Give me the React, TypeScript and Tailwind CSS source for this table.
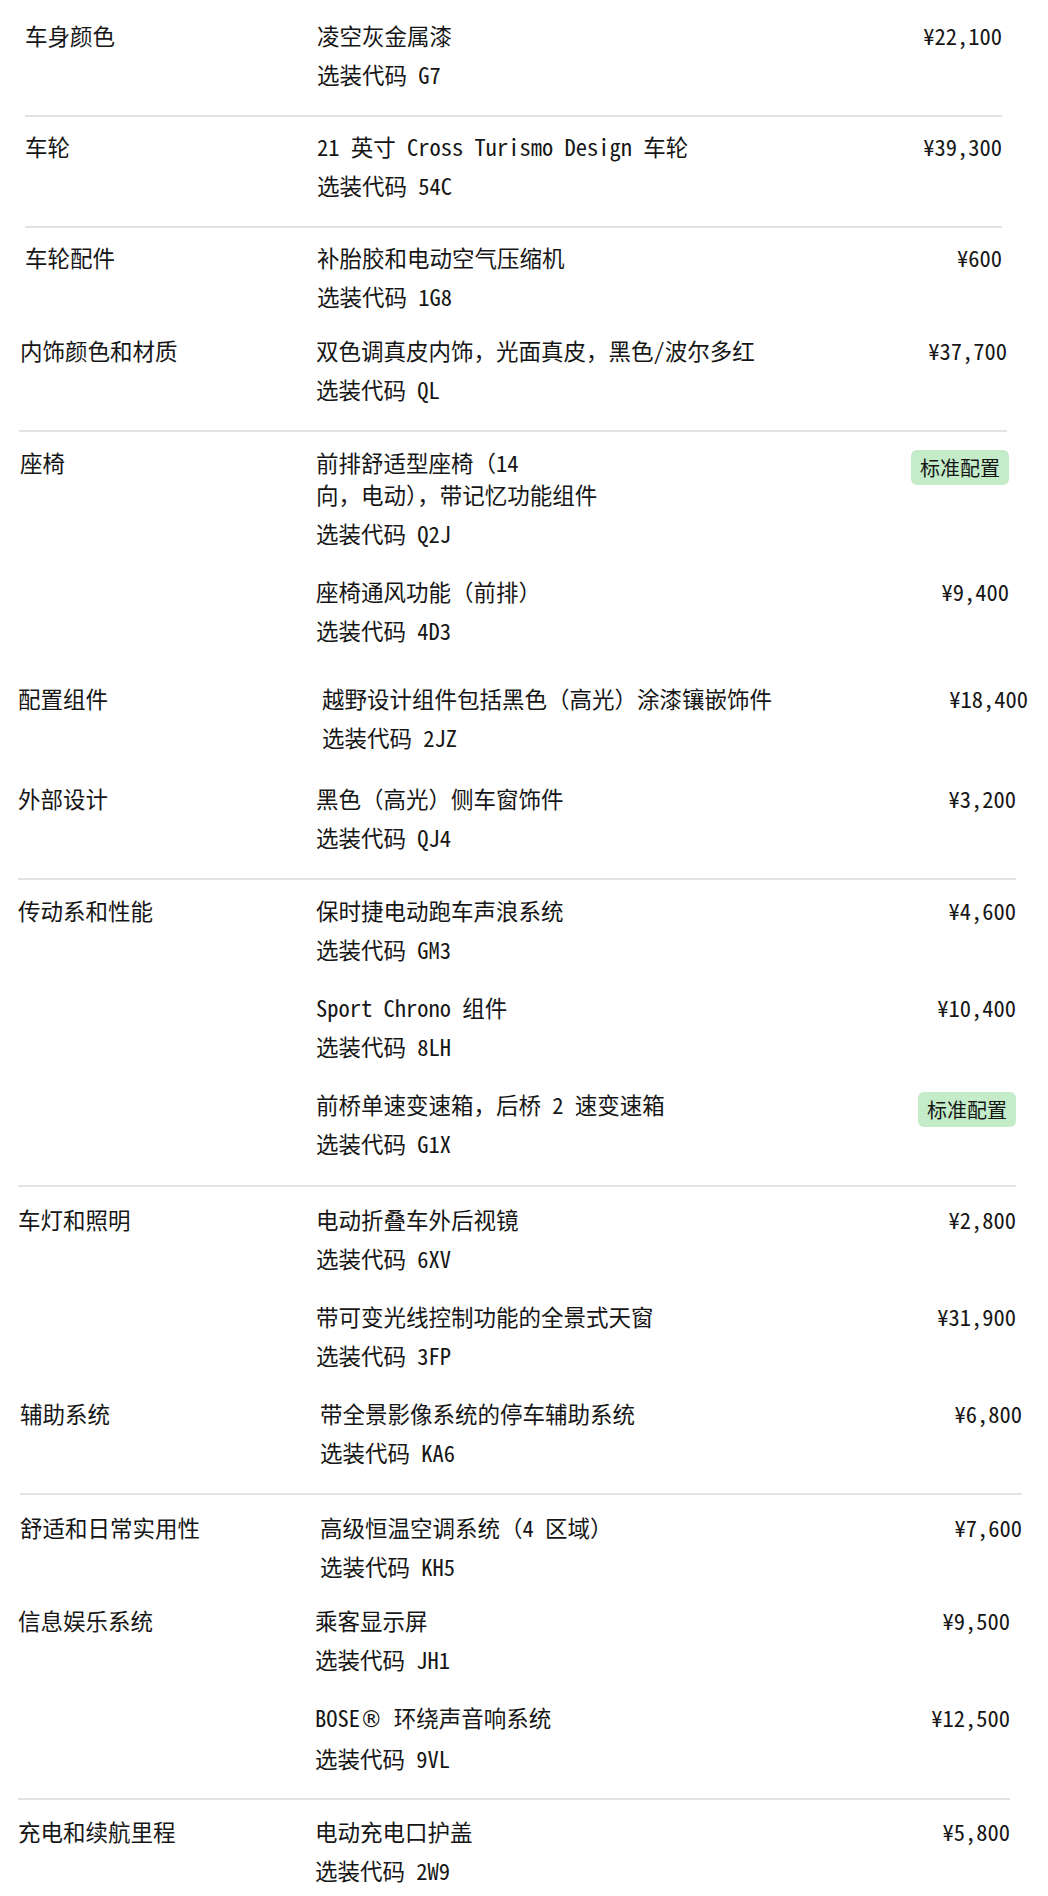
import React from "react";

// Option list of a configured car: category label, then one or more
// options (name + option code) with a price or a "standard" badge.

type Option = {
  name: React.ReactNode;
  code: string;
  price?: string;
  standard?: boolean;
};

type Block = {
  label: string;
  box: string; // margins, width, padding, border
  labelCol: string;
  options: Option[];
};

const blocks: Block[] = [
  {
    label: "车身颜色",
    box: "ml-[25px] w-[977px] pt-[19px] pb-[25px] border-b-2 border-[#e3e3e3]",
    labelCol: "w-[292px]",
    options: [{ name: "凌空灰金属漆", code: "G7", price: "¥22,100" }],
  },
  {
    label: "车轮",
    box: "ml-[25px] w-[977px] pt-[13px] pb-[25px] border-b-2 border-[#e3e3e3]",
    labelCol: "w-[292px]",
    options: [
      { name: "21 英寸 Cross Turismo Design 车轮", code: "54C", price: "¥39,300" },
    ],
  },
  {
    label: "车轮配件",
    box: "ml-[25px] w-[977px] pt-[13px]",
    labelCol: "w-[292px]",
    options: [{ name: "补胎胶和电动空气压缩机", code: "1G8", price: "¥600" }],
  },
  {
    label: "内饰颜色和材质",
    box: "ml-[19px] w-[988px] pt-[22px] pb-[25px] border-b-2 border-[#e3e3e3]",
    labelCol: "w-[297px] pl-[1px]",
    options: [
      { name: "双色调真皮内饰，光面真皮，黑色/波尔多红", code: "QL", price: "¥37,700" },
    ],
  },
  {
    label: "座椅",
    box: "ml-[19px] w-[990px] pt-[14px]",
    labelCol: "w-[297px] pl-[1px]",
    options: [
      {
        name: (
          <>
            前排舒适型座椅（14
            <br />
            向，电动），带记忆功能组件
          </>
        ),
        code: "Q2J",
        standard: true,
      },
      { name: "座椅通风功能（前排）", code: "4D3", price: "¥9,400" },
    ],
  },
  {
    label: "配置组件",
    box: "ml-[18px] w-[1010px] pt-[36px]",
    labelCol: "w-[304px]",
    options: [
      { name: "越野设计组件包括黑色（高光）涂漆镶嵌饰件", code: "2JZ", price: "¥18,400" },
    ],
  },
  {
    label: "外部设计",
    box: "ml-[18px] w-[998px] pt-[29px] pb-[25px] border-b-2 border-[#e3e3e3]",
    labelCol: "w-[298px]",
    options: [{ name: "黑色（高光）侧车窗饰件", code: "QJ4", price: "¥3,200" }],
  },
  {
    label: "传动系和性能",
    box: "ml-[18px] w-[998px] pt-[14px] pb-[26px] border-b-2 border-[#e3e3e3]",
    labelCol: "w-[298px]",
    options: [
      { name: "保时捷电动跑车声浪系统", code: "GM3", price: "¥4,600" },
      { name: "Sport Chrono 组件", code: "8LH", price: "¥10,400" },
      { name: "前桥单速变速箱，后桥 2 速变速箱", code: "G1X", standard: true },
    ],
  },
  {
    label: "车灯和照明",
    box: "ml-[18px] w-[998px] pt-[16px]",
    labelCol: "w-[298px]",
    options: [
      { name: "电动折叠车外后视镜", code: "6XV", price: "¥2,800" },
      { name: "带可变光线控制功能的全景式天窗", code: "3FP", price: "¥31,900" },
    ],
  },
  {
    label: "辅助系统",
    box: "ml-[20px] w-[1002px] pt-[26px] pb-[25px] border-b-2 border-[#e3e3e3]",
    labelCol: "w-[300px]",
    options: [
      { name: "带全景影像系统的停车辅助系统", code: "KA6", price: "¥6,800" },
    ],
  },
  {
    label: "舒适和日常实用性",
    box: "ml-[20px] w-[1002px] pt-[16px]",
    labelCol: "w-[300px]",
    options: [{ name: "高级恒温空调系统（4 区域）", code: "KH5", price: "¥7,600" }],
  },
  {
    label: "信息娱乐系统",
    box: "ml-[18px] w-[992px] pt-[22px] pb-[24px] border-b-2 border-[#e3e3e3]",
    labelCol: "w-[297px]",
    options: [
      { name: "乘客显示屏", code: "JH1", price: "¥9,500" },
      {
        name: (
          <>
            BOSE<span className="font-['DejaVu_Sans']">®</span> 环绕声音响系统
          </>
        ),
        code: "9VL",
        price: "¥12,500",
      },
    ],
  },
  {
    label: "充电和续航里程",
    box: "ml-[18px] w-[992px] pt-[15px] pb-[10px]",
    labelCol: "w-[297px]",
    options: [{ name: "电动充电口护盖", code: "2W9", price: "¥5,800" }],
  },
];

const OptionRow = ({ option }: { option: Option }) => (
  <div className="flex items-start justify-between">
    <div className="min-w-0">
      <p className="leading-[32px]">{option.name}</p>
      <p className="mt-[7px] leading-[32px]">选装代码 {option.code}</p>
    </div>
    {option.standard ? (
      <span className="mt-[4px] shrink-0 rounded-[6px] bg-[#c4ecc9] px-[9px] py-[4px] text-[20px] leading-[27px]">
        标准配置
      </span>
    ) : (
      <span className="shrink-0 leading-[32px]">{option.price}</span>
    )}
  </div>
);

export default function App() {
  return (
    <div className="min-h-[1896px] w-[1048px] bg-white font-['Noto_Sans_Mono_CJK_SC','Noto_Sans_CJK_SC',monospace] text-[22.5px] text-[#161616]">
      {blocks.map((b) => (
        <section key={b.label} className={`flex ${b.box}`}>
          <div className={`shrink-0 leading-[32px] ${b.labelCol}`}>{b.label}</div>
          <div className="flex flex-1 flex-col gap-[26px]">
            {b.options.map((o) => (
              <OptionRow key={o.code} option={o} />
            ))}
          </div>
        </section>
      ))}
    </div>
  );
}
